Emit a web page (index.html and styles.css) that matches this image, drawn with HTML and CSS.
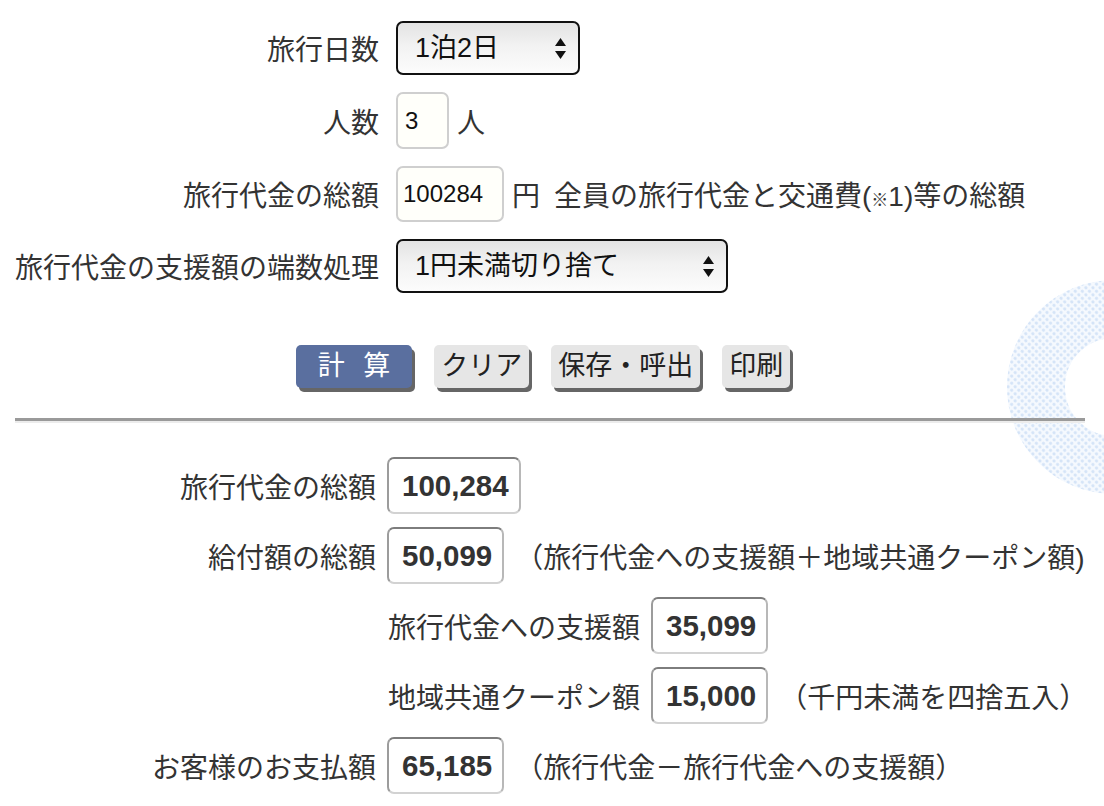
FILE: index.html
```html
<!DOCTYPE html>
<html lang="ja">
<head>
<meta charset="utf-8">
<title>旅行代金 支援額計算</title>
<link rel="stylesheet" href="styles.css">
</head>
<body>
<svg class="deco" width="110" height="235" viewBox="0 0 110 235" aria-hidden="true">
  <defs>
    <pattern id="dots" width="5" height="5" patternUnits="userSpaceOnUse" patternTransform="rotate(45)">
      <circle cx="2.5" cy="2.5" r="1.6" fill="#d3e3f7"/>
    </pattern>
  </defs>
  <circle cx="120" cy="117" r="78" fill="none" stroke="#f5f9fe" stroke-width="58"/>
  <circle cx="120" cy="117" r="78" fill="none" stroke="url(#dots)" stroke-width="58"/>
</svg>
<main class="page">
  <form class="form">
    <label class="f-label">旅行日数</label>
    <div class="f-ctrl">
      <div class="select s-days">
        <select><option>1泊2日</option></select>
        <svg class="arrows" width="11" height="21" viewBox="0 0 11 21"><polygon points="5.5,0 11,8 0,8"/><polygon points="0,13 11,13 5.5,21"/></svg>
      </div>
    </div>

    <label class="f-label">人数</label>
    <div class="f-ctrl">
      <input class="num n-people" type="text" value="3">
      <span class="unit">人</span>
    </div>

    <label class="f-label">旅行代金の総額</label>
    <div class="f-ctrl">
      <input class="num n-total" type="text" value="100284">
      <span class="unit">円</span>
      <span class="hint">全員の旅行代金と交通費(<span class="kome">※</span>1)等の総額</span>
    </div>

    <label class="f-label">旅行代金の支援額の端数処理</label>
    <div class="f-ctrl">
      <div class="select s-round">
        <select><option>1円未満切り捨て</option></select>
        <svg class="arrows" width="11" height="21" viewBox="0 0 11 21"><polygon points="5.5,0 11,8 0,8"/><polygon points="0,13 11,13 5.5,21"/></svg>
      </div>
    </div>
  </form>

  <div class="buttons">
    <button class="btn btn-primary" type="button">計 算</button>
    <button class="btn" type="button">クリア</button>
    <button class="btn" type="button">保存・呼出</button>
    <button class="btn" type="button">印刷</button>
  </div>

  <hr class="rule">

  <section class="results">
    <div class="r-row">
      <span class="r-label">旅行代金の総額</span>
      <output class="r-box">100,284</output>
    </div>
    <div class="r-row">
      <span class="r-label">給付額の総額</span>
      <output class="r-box">50,099</output>
      <span class="r-note">（旅行代金への支援額＋地域共通クーポン額)</span>
    </div>
    <div class="r-row sub">
      <span class="r-label">旅行代金への支援額</span>
      <output class="r-box">35,099</output>
    </div>
    <div class="r-row sub">
      <span class="r-label">地域共通クーポン額</span>
      <output class="r-box">15,000</output>
      <span class="r-note">（千円未満を四捨五入）</span>
    </div>
    <div class="r-row">
      <span class="r-label">お客様のお支払額</span>
      <output class="r-box">65,185</output>
      <span class="r-note">（旅行代金－旅行代金への支援額）</span>
    </div>
  </section>
</main>
</body>
</html>
```

FILE: styles.css
```css
html, body {
  margin: 0;
  padding: 0;
  background: #fff;
}

body {
  position: relative;
  min-height: 806px;
  overflow: hidden;
  font-family: "Liberation Sans", "Noto Sans CJK JP", sans-serif;
  font-size: 28px;
  color: #333;
}

.deco {
  position: absolute;
  left: 994px;
  top: 270px;
  z-index: 0;
}

.page {
  position: relative;
  z-index: 1;
  padding: 21px 19px 0 15px;
}

/* ---- input form ---- */
.form {
  display: grid;
  grid-template-columns: 364px 1fr;
  column-gap: 17px;
  row-gap: 17px;
  align-items: center;
}

.f-label {
  text-align: right;
  white-space: nowrap;
}

.f-ctrl {
  display: flex;
  align-items: center;
  white-space: nowrap;
}

.select {
  position: relative;
  display: inline-block;
}

.select select {
  -webkit-appearance: none;
  appearance: none;
  box-sizing: border-box;
  height: 54px;
  margin: 0;
  padding: 0 0 0 17px;
  border: 2px solid #111;
  border-radius: 7px;
  background: linear-gradient(#e3e3e3, #f2f2f2 45%, #fcfcfc);
  font-family: "Liberation Sans", "Noto Sans CJK JP", sans-serif;
  font-size: 27px;
  color: #111;
}

.s-days select { width: 184px; }
.s-round select { width: 332px; }

.select .arrows {
  position: absolute;
  right: 14px;
  top: 17px;
  fill: #111;
  pointer-events: none;
}

.num {
  box-sizing: border-box;
  height: 56px;
  margin: 0;
  padding: 0 0 0 5px;
  border: 2px solid #cfcfcf;
  border-radius: 7px;
  background: #fffffa;
  font-family: "Liberation Sans", sans-serif;
  font-size: 24px;
  color: #111;
}

.n-people { width: 53px; height: 57px; padding-left: 7px; }
.n-total { width: 108px; }

.unit { margin-left: 8px; }
.hint { margin-left: 14px; }
.kome { font-size: 17px; font-weight: bold; }

/* ---- buttons ---- */
.buttons {
  display: flex;
  justify-content: center;
  gap: 22px;
  margin-top: 52px;
  padding-right: 14px;
}

.btn {
  box-sizing: border-box;
  height: 43px;
  margin: 0;
  padding: 0 7px;
  border: 0;
  border-radius: 5px;
  background: #e6e6e6;
  box-shadow: 3px 4px 0 #666;
  font-family: "Liberation Sans", "Noto Sans CJK JP", sans-serif;
  font-size: 27px;
  color: #222;
  line-height: 43px;
}

.btn-primary {
  padding: 0 22px;
  background: #5a6f9f;
  color: #fff;
  word-spacing: 11px;
}

.rule {
  height: 0;
  margin: 30px 0 0;
  border: 0;
  border-top: 3px solid #9a9a9a;
  border-bottom: 2px solid #ececec;
}

/* ---- results ---- */
.results {
  display: flex;
  flex-direction: column;
  gap: 13px;
  margin-top: 34px;
}

.r-row {
  display: flex;
  align-items: center;
  gap: 11px;
  height: 57px;
  white-space: nowrap;
}

.r-label {
  flex: none;
  width: 361px;
  text-align: right;
}

.r-row.sub { padding-left: 373px; }
.r-row.sub .r-label { width: auto; }

.r-box {
  box-sizing: border-box;
  display: inline-flex;
  align-items: center;
  height: 57px;
  padding: 0 10px 0 13px;
  border: 2px solid;
  border-color: #7d7d7d #b8b8b8 #d2d2d2 #9c9c9c;
  border-radius: 7px;
  background: #fff;
  font-family: "Liberation Sans", sans-serif;
  font-weight: bold;
  font-size: 29.5px;
  color: #333;
}
```
